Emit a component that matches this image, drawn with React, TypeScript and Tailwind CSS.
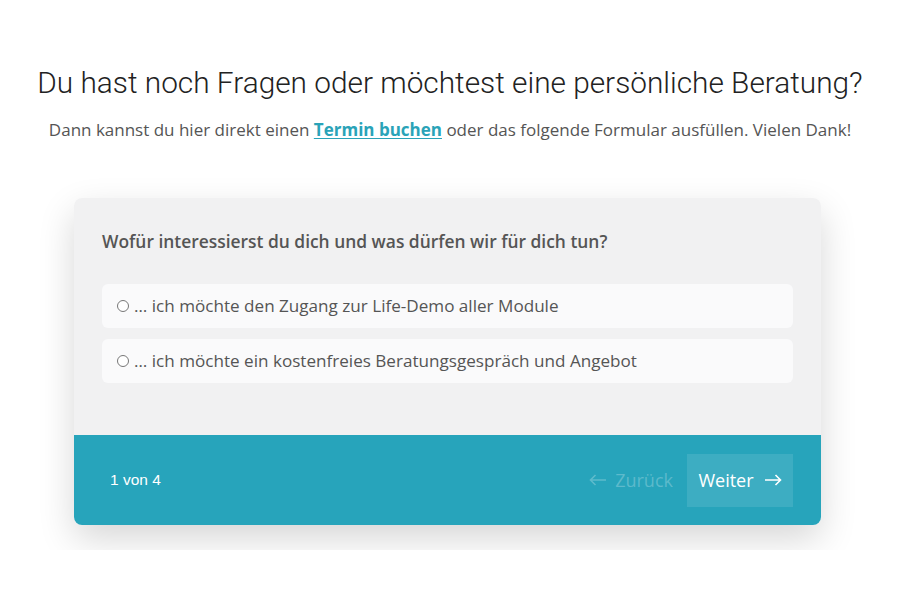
export default function App() {
  const options = [
    '… ich möchte den Zugang zur Life-Demo aller Module',
    '… ich möchte ein kostenfreies Beratungsgespräch und Angebot',
  ]
  return (
    <div className="min-h-[600px] w-[900px] bg-white">
      <h1 className="pt-[64px] text-center font-['Roboto',sans-serif] text-[29.8px] font-light leading-[38px] text-[#222]">
        Du hast noch Fragen oder möchtest eine persönliche Beratung?
      </h1>
      <p className="mt-[15px] text-center font-['Open_Sans',sans-serif] text-[17px] leading-[26px] text-[#555]">
        Dann kannst du hier direkt einen{' '}
        <a href="#" className="font-bold text-[#2aa3b8] underline underline-offset-2">Termin buchen</a>{' '}
        oder das folgende Formular ausfüllen. Vielen Dank!
      </p>
      <div className="mt-[30px] overflow-hidden pb-[25px] pt-[25px]">
        <div className="ml-[74px] w-[747px] overflow-hidden rounded-lg shadow-[0_14px_36px_rgba(0,0,0,0.16)]">
          <div className="bg-[#f1f1f2] px-[28px] pb-[52px] pt-[30px]">
            <p className="font-['Open_Sans',sans-serif] text-[17.4px] font-semibold leading-[26px] text-[#555]">
              Wofür interessierst du dich und was dürfen wir für dich tun?
            </p>
            <div className="mt-[30px] flex flex-col gap-[11px]">
              {options.map((o) => (
                <label key={o} className="flex h-[44px] items-center gap-[5px] rounded-md bg-[#fafafb] px-[15px] font-['Open_Sans',sans-serif] text-[17.1px] text-[#555]">
                  <span className="h-[12px] w-[12px] rounded-full border border-[#777] bg-white" />
                  {o}
                </label>
              ))}
            </div>
          </div>
          <div className="flex h-[90px] items-center justify-between bg-[#27a4bb] pl-[36px] pr-[28px]">
            <span className="font-['Liberation_Sans',sans-serif] text-[15.5px] text-white">1 von 4</span>
            <div className="flex items-center gap-[14px]">
              <button className="flex items-center gap-[8px] font-['Open_Sans',sans-serif] text-[18px] text-white/25">
                <svg width="18" height="12" viewBox="0 0 18 12" fill="none" stroke="currentColor" strokeWidth="1.6"><path d="M17 6H1.5M6.5 1L1.5 6l5 5" /></svg>
                Zurück
              </button>
              <button className="flex h-[53px] w-[106px] items-center justify-center gap-[10px] bg-white/10 font-['Open_Sans',sans-serif] text-[18px] text-white">
                Weiter
                <svg width="18" height="12" viewBox="0 0 18 12" fill="none" stroke="currentColor" strokeWidth="1.6"><path d="M1 6h15.5M11.5 1l5 5-5 5" /></svg>
              </button>
            </div>
          </div>
        </div>
      </div>
    </div>
  )
}
